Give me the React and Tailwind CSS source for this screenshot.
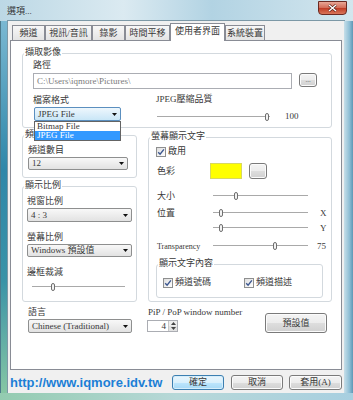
import React from "react";

const btnBg = "bg-[linear-gradient(#f4f4f4_0%,#ececec_50%,#dedede_50%,#d0d0d0_100%)]";

const Group = ({ label, className = "", children }) => (
  <div className={`relative border border-[#d3d9de] rounded-[3px] ${className}`}>
    <span className="absolute left-[1px] top-[-7px] bg-white px-[1px]">{label}</span>
    {children}
  </div>
);

const Btn = ({ className = "", focus, children }) => (
  <div
    className={`flex items-center justify-center rounded-[3px] border ${
      focus
        ? "border-[#3c7fb1] bg-[linear-gradient(#eaf6fd_0%,#d9f0fc_50%,#bee6fd_50%,#a7d9f5_100%)] shadow-[inset_0_0_0_1px_#d6eefb]"
        : `border-[#7a7a7a] ${btnBg} shadow-[inset_0_0_0_1px_#fbfbfb]`
    } ${className}`}
  >
    {children}
  </div>
);

const Combo = ({ text, className = "", active }) => (
  <div
    className={`flex items-center justify-between pl-[3px] pr-[3px] rounded-[2px] border ${
      active
        ? "border-[#5b8fbf] bg-[linear-gradient(#eef7fd,#c9e6f7)]"
        : "border-[#8e8f8f] bg-[linear-gradient(#f8f8f8,#e2e2e2)]"
    } ${className}`}
  >
    <span className="whitespace-nowrap">{text}</span>
    <svg width="5" height="3" viewBox="0 0 5 3">
      <path d="M0 0H5L2.5 3Z" fill="#111" />
    </svg>
  </div>
);

const Slider = ({ className = "", pos }) => (
  <div className={`relative h-[10px] ${className}`}>
    <div className="absolute left-0 right-0 top-[4px] h-[2px] border-t border-b border-t-[#a9a9a9] border-b-white" />
    <div
      className="absolute top-[1px] w-[4px] h-[8px] rounded-[2px] border border-[#6f6f6f] bg-[#f3f3f3]"
      style={{ left: pos - 2 }}
    />
  </div>
);

const Check = ({ label }) => (
  <div className="flex items-center gap-[2px]">
    <span className="w-[10px] h-[10px] border border-[#8e8f8f] bg-[linear-gradient(135deg,#dedede,#ffffff)] flex items-center justify-center">
      <svg width="8" height="8" viewBox="0 0 8 8">
        <path d="M1.2 4.2L3.1 6.2L6.9 1.4" stroke="#3b568f" strokeWidth="1.4" fill="none" />
      </svg>
    </span>
    <span>{label}</span>
  </div>
);

const tabs = [
  { t: "頻道", w: "w-[33px]" },
  { t: "視訊/音訊", w: "w-[47px]" },
  { t: "錄影", w: "w-[33px]" },
  { t: "時間平移", w: "w-[45px]" },
  { t: "使用者界面", w: "w-[55px]", on: true },
  { t: "系統裝置", w: "w-[40px]" },
];

export default function App() {
  return (
    <div className="w-[353px] h-[400px] overflow-hidden flex flex-col bg-[linear-gradient(#c3dbe7,#a8cfdc_60%,#9ccbb9)] font-['Liberation_Serif','Noto_Sans_CJK_TC',serif] text-[9px] leading-[11px] text-[#383838]">
      {/* title bar */}
      <div className="h-[21px] flex items-start justify-between pl-[7px] pr-[6px] bg-[linear-gradient(90deg,#bcd8e5,#dbeaf1_35%,#b2d3e3_60%,#d3e6ee)]">
        <span className="mt-[6px] text-[#333]">選項...</span>
        <div className="mt-[1px] w-[29px] h-[14px] rounded-b-[4px] border border-[#6b2a22] bg-[linear-gradient(#e9a796,#d26a55_50%,#bf3b24_51%,#d9765a)] flex items-center justify-center">
          <svg width="9" height="8" viewBox="0 0 9 8">
            <path d="M1 1L8 7M8 1L1 7" stroke="#4a1a12" strokeWidth="2.6" />
            <path d="M1 1L8 7M8 1L1 7" stroke="#fff" strokeWidth="1.5" />
          </svg>
        </div>
      </div>

      <div className="flex h-[372px]">
        <div className="w-[8px] border-l border-[#4d7a8c] bg-[linear-gradient(#7ab8d2,#2f87a9_40%,#3a93a7_70%,#86c6a4)]" />

        {/* client */}
        <div className="w-[336px] bg-[#f0f0f0] shadow-[0_0_0_1px_#7c98a6] flex flex-col">
          {/* tabs */}
          <div className="h-[19px] flex items-end pl-[4px]">
            {tabs.map((tb) => (
              <div
                key={tb.t}
                className={`${tb.w} flex items-center justify-center border border-[#898c95] border-b-0 ${
                  tb.on
                    ? "h-[18px] -mb-px bg-white relative z-10 pb-[2px]"
                    : "h-[15px] bg-[linear-gradient(#f7f7f7,#e4e4e4)] pt-[1px]"
                }`}
              >
                {tb.t}
              </div>
            ))}
          </div>

          {/* panel */}
          <div className="ml-[2px] w-[332px] h-[330px] border border-[#898c95] bg-white pt-[12px] pl-[11px] flex flex-col">
            <Group label="擷取影像" className="w-[310px] h-[75px] shrink-0">
              <div className="pl-[10px] pt-[6px]">
                <div>路徑</div>
                <div className="flex items-start mt-[2px]">
                  <div className="w-[259px] h-[16px] border border-[#abadb3] bg-white flex items-center pl-[3px] text-[#7a7a7a]">
                    C:\Users\iqmore\Pictures\
                  </div>
                  <Btn className="ml-[7px] w-[18px] h-[14px] text-[7px] leading-[7px] text-[#666]">...</Btn>
                </div>
                <div className="flex">
                  <div className="w-[88px] pt-[6px]">
                    <div>檔案格式</div>
                    <div className="relative ml-[1px] mt-[1px] w-[87px]">
                      <Combo text="JPEG File" active className="h-[14px]" />
                      <div className="absolute left-0 top-full w-[87px] z-20 border border-[#646464] bg-white">
                        <div className="h-[9px] leading-[9px] pl-[2px]">Bitmap File</div>
                        <div className="h-[9px] leading-[9px] pl-[2px] bg-[#3399ff] text-white">JPEG File</div>
                      </div>
                    </div>
                  </div>
                  <div className="ml-[35px] pt-[5px]">
                    <div>JPEG壓縮品質</div>
                    <div className="flex items-center mt-[6px] ml-[1px]">
                      <Slider className="w-[113px]" pos={110} />
                      <span className="ml-[15px]">100</span>
                    </div>
                  </div>
                </div>
              </div>
            </Group>

            <div className="flex items-start">
              {/* left column */}
              <div className="w-[115px] flex flex-col">
                <Group label="頻道" className="mt-[7px] h-[43px]">
                  <div className="pl-[5px] pt-[9px]">
                    <div>頻道數目</div>
                    <Combo text="12" className="mt-[1px] w-[100px] h-[13px]" />
                  </div>
                </Group>
                <Group label="顯示比例" className="mt-[8px] h-[116px]">
                  <div className="pl-[4px] pt-[9px]">
                    <div>視窗比例</div>
                    <Combo text="4 : 3" className="mt-[1px] w-[105px] h-[14px]" />
                    <div className="mt-[10px]">螢幕比例</div>
                    <Combo text="Windows 預設值" className="mt-[1px] w-[105px] h-[13px]" />
                    <div className="mt-[10px]">邊框裁減</div>
                    <Slider className="mt-[4px] ml-[5px] w-[93px]" pos={21} />
                  </div>
                </Group>
                <div className="pl-[6px] mt-[5px]">
                  <div>語言</div>
                  <Combo text="Chinese (Traditional)" className="mt-[1px] w-[104px] h-[14px]" />
                </div>
              </div>

              {/* right column */}
              <div className="ml-[11px] w-[184px] flex flex-col">
                <Group label="螢幕顯示文字" className="mt-[9px] h-[165px]">
                  <div className="pl-[7px] pt-[8px] flex flex-col">
                    <Check label="啟用" />
                    <div className="flex items-center mt-[6px] h-[16px]">
                      <span className="w-[54px] pl-[1px]">色彩</span>
                      <div className="w-[32px] h-[16px] bg-[#ffff00] border border-[#d8d860]" />
                      <Btn className="ml-[7px] w-[18px] h-[16px]" />
                    </div>
                    <div className="flex items-center mt-[11px] h-[12px]">
                      <span className="w-[57px] pl-[1px]">大小</span>
                      <Slider className="w-[95px]" pos={23} />
                    </div>
                    <div className="flex items-center mt-[5px] h-[12px]">
                      <span className="w-[57px] pl-[1px]">位置</span>
                      <Slider className="w-[95px]" pos={8} />
                      <span className="ml-[12px]">X</span>
                    </div>
                    <div className="flex items-center mt-[3px] h-[12px]">
                      <span className="w-[57px]" />
                      <Slider className="w-[95px]" pos={8} />
                      <span className="ml-[12px]">Y</span>
                    </div>
                    <div className="flex items-center mt-[6px] h-[12px]">
                      <span className="w-[57px] pl-[1px] text-[8px]">Transparency</span>
                      <Slider className="w-[95px]" pos={62} />
                      <span className="ml-[9px]">75</span>
                    </div>
                    <Group label="顯示文字內容" className="mt-[12px] w-[167px] h-[34px]">
                      <div className="flex pl-[6px] pt-[12px]">
                        <div className="w-[81px]">
                          <Check label="頻道號碼" />
                        </div>
                        <Check label="頻道描述" />
                      </div>
                    </Group>
                  </div>
                </Group>
                <div className="flex items-start">
                  <div className="mt-[5px]">
                    <div className="whitespace-nowrap">PiP / PoP window number</div>
                    <div className="mt-[2px] -ml-px w-[31px] h-[12px] border border-[#abadb3] bg-white flex items-center justify-end">
                      <span className="mr-[2px]">4</span>
                      <div className="w-[9px] h-[10px] flex flex-col border-l border-[#c8c8c8]">
                        <div className="h-[5px] flex items-center justify-center bg-[#eeeeee]">
                          <svg width="5" height="3" viewBox="0 0 5 3"><path d="M0 3H5L2.5 0Z" fill="#444" /></svg>
                        </div>
                        <div className="h-[5px] flex items-center justify-center bg-[#e2e2e2]">
                          <svg width="5" height="3" viewBox="0 0 5 3"><path d="M0 0H5L2.5 3Z" fill="#444" /></svg>
                        </div>
                      </div>
                    </div>
                  </div>
                  <Btn className="ml-auto mr-[5px] mt-[11px] w-[62px] h-[20px]">預設值</Btn>
                </div>
              </div>
            </div>
          </div>

          {/* bottom row */}
          <div className="mt-[5px] h-[15px] flex items-center pl-[2px] pr-[2px]">
            <span className="font-['Liberation_Sans',Arial,sans-serif] font-bold text-[13px] leading-[15px] text-[#1c7fd6]">
              http://www.iqmore.idv.tw
            </span>
            <Btn focus className="ml-auto w-[52px] h-[15px]">確定</Btn>
            <Btn className="ml-[7px] w-[52px] h-[15px]">取消</Btn>
            <Btn className="ml-[6px] w-[53px] h-[15px]">套用(A)</Btn>
          </div>
        </div>

        <div className="w-[9px] bg-[linear-gradient(90deg,#c7dfe9,#8fbfd6_60%,#5d97b5)]" />
      </div>

      <div className="h-[7px] bg-[linear-gradient(90deg,#93cbb0,#b7d8d8_50%,#a8cfe0)]" />
    </div>
  );
}
